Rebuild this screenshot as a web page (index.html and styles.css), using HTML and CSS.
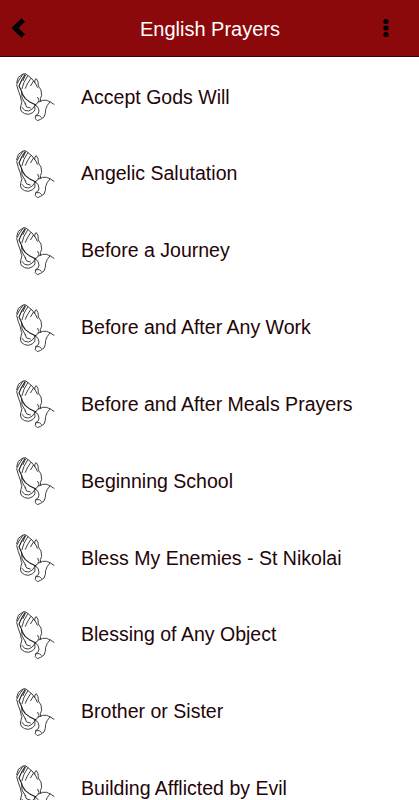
FILE: index.html
```
<!DOCTYPE html>
<html lang="en">
<head>
    <meta charset="UTF-8">
    <meta name="viewport" content="width=device-width, initial-scale=1.0">
    <title>English Prayers</title>
    <link rel="stylesheet" href="styles.css">
</head>
<body>
    <svg class="sprite" aria-hidden="true">
        <symbol id="hands" viewBox="0 0 150 180">
            <!-- fingers and thumb -->
            <path d="M20 44 L25 28 L39 18 L46 17 L54 23 L66 33 L74 43 L75 35 L79 32 L84 41 L85 54 L93 66 L95 82 L91 92 L92 100"/>
            <path d="M39 19 L27 36 L20 50 L25 68 L31 84 L34 98"/>
            <path class="bold" d="M45 20 L35 36 L27 54 L33 66 L38 80 L46 92 L58 101 L70 107 L78 111"/>
            <path d="M53 24 L42 43 L36 62 M62 32 L52 48 L46 61 M70 40 L62 53 M46 22 L39 38"/>
            <path d="M74 43 L79 51 L82 58"/>
            <!-- wrist -->
            <path d="M35 72 L36 90 L47 108 M83 88 L87 97 L84 102"/>
            <!-- cuffs -->
            <path d="M36 100 L31 120 L34 130 L44 137 L56 139 L68 134 L75 126 L74 112 M36 118 L44 127 L56 129 L67 123 L72 116 M45 107 L50 117 L61 120"/>
            <path d="M75 111 L86 102 L98 97 L110 97 L121 102 L132 109 M75 111 L84 118 L87 129 L85 137 L77 143 L76 152 L82 158 L92 154 L102 147 L106 136 L107 124 L112 112 L120 102 M78 143 L88 143 L94 148"/>
        </symbol>
    </svg>

    <header class="topbar">
        <button class="back" aria-label="Back">
            <svg width="14" height="20" viewBox="0 0 14 20"><path d="M12.3 2 L4 10 L12.3 18"/></svg>
        </button>
        <h1>English Prayers</h1>
        <button class="more" aria-label="More">
            <svg width="6" height="20" viewBox="0 0 6 20"><circle cx="3" cy="3.5" r="2.6"/><circle cx="3" cy="10" r="2.6"/><circle cx="3" cy="16.5" r="2.6"/></svg>
        </button>
    </header>

    <ul class="prayers">
        <li><svg class="hands"><use href="#hands"/></svg><span>Accept Gods Will</span></li>
        <li><svg class="hands"><use href="#hands"/></svg><span>Angelic Salutation</span></li>
        <li><svg class="hands"><use href="#hands"/></svg><span>Before a Journey</span></li>
        <li><svg class="hands"><use href="#hands"/></svg><span>Before and After Any Work</span></li>
        <li><svg class="hands"><use href="#hands"/></svg><span>Before and After Meals Prayers</span></li>
        <li><svg class="hands"><use href="#hands"/></svg><span>Beginning School</span></li>
        <li><svg class="hands"><use href="#hands"/></svg><span>Bless My Enemies - St Nikolai</span></li>
        <li><svg class="hands"><use href="#hands"/></svg><span>Blessing of Any Object</span></li>
        <li><svg class="hands"><use href="#hands"/></svg><span>Brother or Sister</span></li>
        <li><svg class="hands"><use href="#hands"/></svg><span>Building Afflicted by Evil</span></li>
    </ul>
</body>
</html>
```

FILE: styles.css
```
* {
    box-sizing: border-box;
    margin: 0;
    padding: 0;
}
body {
    font-family: "Liberation Sans", Arial, sans-serif;
    background: #fff;
    color: #240508;
    height: 100vh;
    overflow: hidden;
}
.sprite {
    display: none;
}
.topbar {
    display: grid;
    grid-template-columns: 20px 1fr 20px;
    align-items: center;
    height: 57px;
    padding: 0 23px 0 11px;
    background: #8b090b;
    border-bottom: 1px solid #3c0002;
}
h1 {
    font-size: 20px;
    font-weight: 400;
    line-height: 24px;
    color: #fff;
    text-align: center;
    padding: 1px 0 0 13px;
}
button {
    display: flex;
    border: none;
    background: none;
}
.back path {
    fill: none;
    stroke: #000;
    stroke-width: 5;
}
.more {
    justify-content: center;
}
.prayers {
    list-style: none;
    padding-top: 1.6px;
}
.prayers li {
    display: flex;
    align-items: center;
    height: 76.85px;
    padding-left: 10px;
    font-size: 19.55px;
    white-space: nowrap;
}
.hands {
    width: 50px;
    height: 60px;
    margin: 2px 21px 0 0;
    fill: none;
    stroke: #1a1a1a;
    stroke-width: 2.5;
    stroke-linejoin: round;
    stroke-linecap: round;
}
.bold {
    stroke-width: 3.2;
}
```
